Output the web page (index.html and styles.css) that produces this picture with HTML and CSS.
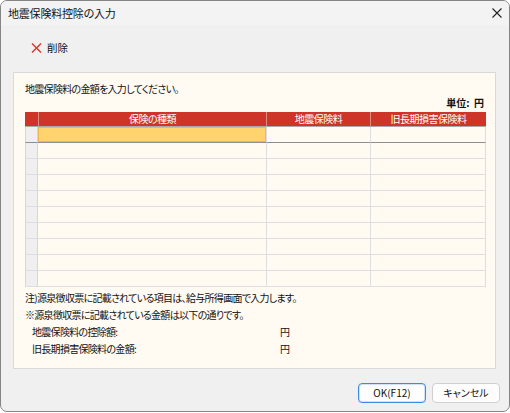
FILE: index.html
```html
<!DOCTYPE html>
<html lang="ja">
<head>
<meta charset="utf-8">
<link rel="stylesheet" href="styles.css">
</head>
<body>
<div class="window">
  <div class="titlebar">
    <span class="title">地震保険料控除の入力</span>
    <span class="close"><svg width="10" height="10" viewBox="0 0 10 10"><path d="M0.5 0.5L9.5 9.5M9.5 0.5L0.5 9.5" stroke="#222" stroke-width="1.1" fill="none"/></svg></span>
  </div>
  <div class="toolbar">
    <span class="tool">
      <svg width="11" height="10" viewBox="0 0 11 10"><path d="M1 0.5L10 9.5M10 0.5L1 9.5" stroke="#d9342b" stroke-width="1.4" fill="none"/></svg>
      <span>削除</span>
    </span>
  </div>
  <div class="panel">
    <div class="instr">地震保険料の金額を入力してください。</div>
    <div class="unit">単位:&nbsp;&nbsp;円</div>
    <div class="grid">
      <div class="hc rh"></div>
      <div class="hc">保険の種類</div>
      <div class="hc">地震保険料</div>
      <div class="hc">旧長期損害保険料</div>

      <div class="c rh first"></div><div class="c sel first"></div><div class="c first"></div><div class="c first"></div>
      <div class="c rh"></div><div class="c"></div><div class="c"></div><div class="c"></div>
      <div class="c rh"></div><div class="c"></div><div class="c"></div><div class="c"></div>
      <div class="c rh"></div><div class="c"></div><div class="c"></div><div class="c"></div>
      <div class="c rh"></div><div class="c"></div><div class="c"></div><div class="c"></div>
      <div class="c rh"></div><div class="c"></div><div class="c"></div><div class="c"></div>
      <div class="c rh"></div><div class="c"></div><div class="c"></div><div class="c"></div>
      <div class="c rh"></div><div class="c"></div><div class="c"></div><div class="c"></div>
      <div class="c rh"></div><div class="c"></div><div class="c"></div><div class="c"></div>
      <div class="c rh"></div><div class="c"></div><div class="c"></div><div class="c"></div>
    </div>
    <div class="notes">
      <div class="note">注)源泉徴収票に記載されている項目は、給与所得画面で入力します。</div>
      <div class="note">※源泉徴収票に記載されている金額は以下の通りです。</div>
      <div class="note amt"><span class="lbl">地震保険料の控除額:</span><span class="yen">円</span></div>
      <div class="note amt"><span class="lbl">旧長期損害保険料の金額:</span><span class="yen">円</span></div>
    </div>
  </div>
  <div class="footer">
    <button class="btn ok">OK(F12)</button>
    <button class="btn">キャンセル</button>
  </div>
</div>
</body>
</html>
```
FILE: styles.css
```css
html, body {
  margin: 0;
  padding: 0;
  background: #ffffff;
}
body {
  font-family: "Noto Sans CJK JP", "Noto Sans", sans-serif;
  font-feature-settings: "palt";
  color: #111111;
}
.window {
  width: 510px;
  height: 412px;
  box-sizing: border-box;
  border: 1px solid #858585;
  border-radius: 7px;
  background: #f0f0f0;
  overflow: hidden;
  display: flex;
  flex-direction: column;
}
.titlebar {
  height: 24px;
  background: #f3f3f3;
  display: flex;
  align-items: center;
  justify-content: space-between;
  padding: 0 7px 0 7px;
  flex: none;
}
.title {
  font-size: 11px;
  line-height: 14px;
  letter-spacing: -0.2px;
}
.close {
  display: flex;
  width: 10px;
  height: 10px;
  margin-top: -1px;
}
.toolbar {
  height: 47px;
  flex: none;
  display: flex;
  align-items: center;
  padding-left: 30px;
}
.tool {
  display: flex;
  align-items: center;
  gap: 5px;
  font-size: 10.5px;
  line-height: 12px;
  margin-top: -1px;
}
.panel {
  flex: none;
  margin-left: 12px;
  width: 483px;
  height: 297px;
  box-sizing: border-box;
  border: 1px solid #d9d9d9;
  background: #fffaf2;
  padding: 9px 9px 0 11px;
  font-size: 10px;
  letter-spacing: -0.7px;
}
.instr {
  line-height: 14px;
}
.unit {
  line-height: 14px;
  text-align: right;
  font-weight: bold;
  padding-right: 2px;
  letter-spacing: 0;
}
.grid {
  margin-top: 2px;
  display: grid;
  grid-template-columns: 13px 228px 104px 116px;
  width: 461px;
}
.hc {
  height: 14px;
  background: #cc3527;
  color: #ffffff;
  text-align: center;
  font-size: 10px;
  letter-spacing: -0.5px;
  line-height: 14px;
  border-left: 1px solid #e08a80;
  border-bottom: 1px solid #a9a9a9;
}
.hc.rh {
  border-left: none;
}
.c {
  height: 15px;
  background: #fffaf2;
  border-bottom: 1px solid #dedede;
  border-left: 1px solid #dedede;
}
.c:nth-child(4n) {
  border-right: 1px solid #dedede;
}
.c.rh {
  background: #efefef;
  border-left: 1px solid #d6d6d6;
  border-right: 1px solid #d6d6d6;
}
.c.rh + .c {
  border-left: none;
}
.c.first {
  border-bottom: 1px solid #8e8e8e;
}
.c.sel {
  background: #ffd46f;
  box-shadow: inset 0 0 0 1px #f0b84a;
}
.notes {
  margin-top: 2px;
}
.note {
  line-height: 17px;
  height: 17px;
}
.amt {
  display: flex;
  padding-left: 7px;
}
.lbl {
  width: 248px;
}
.footer {
  flex: 1;
  display: flex;
  justify-content: flex-end;
  align-items: flex-start;
  gap: 6px;
  padding: 14px 9px 0 0;
}
.btn {
  width: 68px;
  height: 20px;
  box-sizing: border-box;
  border: 1px solid #d0d0d0;
  border-radius: 4px;
  background: #fdfdfd;
  font-family: "Noto Sans CJK JP", "Noto Sans", sans-serif;
  font-feature-settings: "palt";
  font-size: 10px;
  line-height: 16px;
  color: #111111;
  padding: 0;
}
.btn.ok {
  border: 1px solid #3d8be0;
  box-shadow: inset 0 0 0 1px #cfe2f7;
}
```
